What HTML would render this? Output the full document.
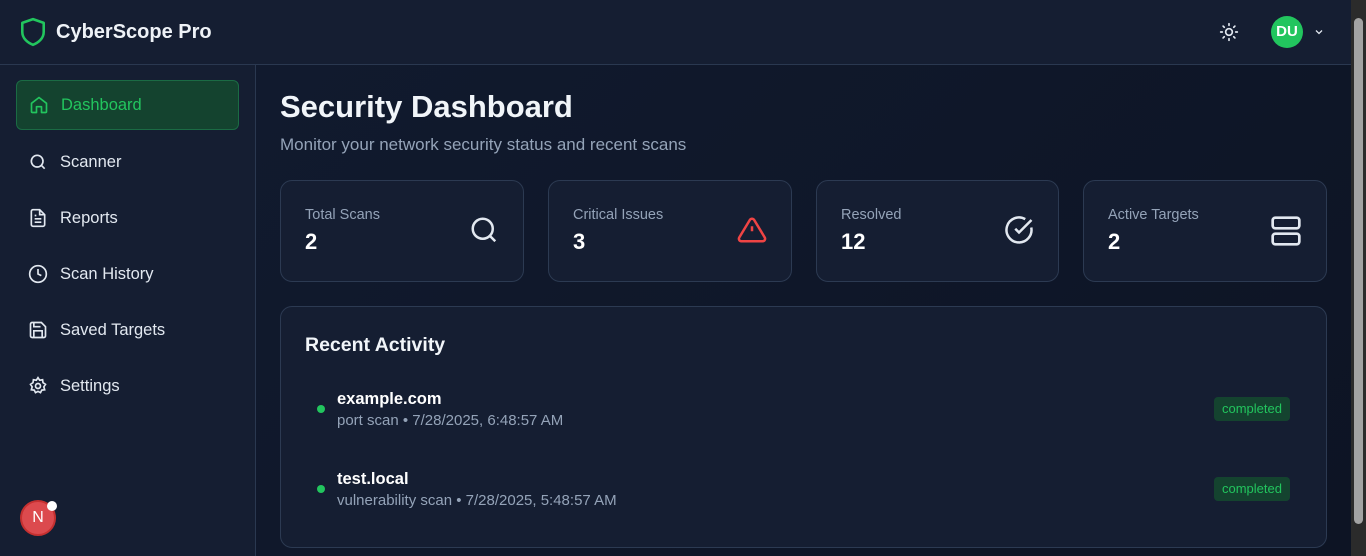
<!DOCTYPE html>
<html><head><meta charset="utf-8"><style>
*{box-sizing:border-box;margin:0;padding:0}
body{width:1366px;height:556px;overflow:hidden;background:#0f172a;font-family:"Liberation Sans",sans-serif;color:#f1f5f9;position:relative}
.hdr{position:absolute;left:0;top:0;width:1351px;height:65px;background:#151e32;border-bottom:1px solid #2a3850}
.logo{position:absolute;left:20px;top:17px}
.brand{position:absolute;left:56px;top:21px;font-size:20px;font-weight:bold;color:#eef2f7}
.side{position:absolute;left:0;top:65px;width:256px;height:491px;background:#151e32;border-right:1px solid #2a3850}
.nav{position:absolute;left:16px;width:223px;height:50px;display:flex;align-items:center;padding-left:12px;font-size:16.5px;color:#e2e8f0}
.nav svg{margin-right:12px}
.nav.act{background:#14432f;border:1px solid #1b6b44;border-radius:6px;color:#22c55e}
.main{position:absolute;left:256px;top:65px;width:1095px;height:491px;background:linear-gradient(135deg,#111a2e,#0d1424)}
h1{position:absolute;left:24px;top:24px;font-size:31px;font-weight:bold}
.sub{position:absolute;left:24px;top:70px;font-size:17px;color:#94a3b8}
.card{position:absolute;top:115px;height:102px;background:#151e32;border:1px solid #2c3a52;border-radius:12px}
.card .l{position:absolute;left:24px;top:26px;font-size:14.5px;color:#94a3b8}
.card .v{position:absolute;left:24px;top:48px;font-size:22px;font-weight:bold;color:#fff}
.card svg{position:absolute;right:24px;top:34px}
.act2{position:absolute;left:24px;top:241px;width:1047px;height:242px;background:#151e32;border:1px solid #2c3a52;border-radius:12px}
.act2 h2{position:absolute;left:24px;top:27px;font-size:19.5px;font-weight:bold}
.it{position:absolute;left:56px;font-size:16.5px;font-weight:bold;color:#fff}
.it div{font-size:15px;font-weight:normal;color:#94a3b8;margin-top:3px}
.dot{position:absolute;left:36px;width:8px;height:8px;border-radius:50%;background:#22c55e}
.badge{position:absolute;left:933px;width:76px;height:24px;border-radius:4px;background:#14432f;color:#22c55e;font-size:13px;text-align:center;line-height:24px}
.sb{position:absolute;left:1351px;top:0;width:15px;height:556px;background:#2b2b2b}
.thumb{position:absolute;left:1354px;top:18px;width:9px;height:506px;background:#a3a3a3;border-radius:5px}
</style></head><body>
<div class="hdr">
<svg class="logo" width="26" height="30" viewBox="0 0 24 28" fill="none" stroke="#22c55e" stroke-width="2.4" stroke-linejoin="round"><path d="M12 2 L22 5.5 V14 C22 20 17 24 12 26 C7 24 2 20 2 14 V5.5 Z"/></svg>
<div class="brand">CyberScope Pro</div>
<svg style="position:absolute;left:1219px;top:22px" width="20" height="20" viewBox="0 0 24 24" fill="none" stroke="#e2e8f0" stroke-width="2" stroke-linecap="round"><circle cx="12" cy="12" r="4"/><path d="M12 2v2M12 20v2M4.9 4.9l1.4 1.4M17.7 17.7l1.4 1.4M2 12h2M20 12h2M4.9 19.1l1.4-1.4M17.7 6.3l1.4-1.4"/></svg>
<div style="position:absolute;left:1271px;top:16px;width:32px;height:32px;border-radius:50%;background:#22c55e;color:#fff;font-weight:bold;font-size:15px;text-align:center;line-height:32px">DU</div>
<svg style="position:absolute;left:1313px;top:26px" width="12" height="12" viewBox="0 0 24 24" fill="none" stroke="#e2e8f0" stroke-width="2.5"><path d="M6 9l6 6 6-6"/></svg>
</div>
<div class="side">
<div class="nav act" style="top:15px"><svg width="20" height="20" viewBox="0 0 24 24" fill="none" stroke="#22c55e" stroke-width="2" stroke-linejoin="round"><path d="M3 10l9-7 9 7v10a1 1 0 0 1-1 1h-5v-7h-6v7H4a1 1 0 0 1-1-1z"/></svg>Dashboard</div>
<div class="nav" style="top:72px"><svg width="20" height="20" viewBox="0 0 24 24" fill="none" stroke="#e2e8f0" stroke-width="2"><circle cx="11" cy="11" r="7"/><path d="M20 20l-4-4"/></svg>Scanner</div>
<div class="nav" style="top:128px"><svg width="20" height="20" viewBox="0 0 24 24" fill="none" stroke="#e2e8f0" stroke-width="2"><path d="M14 2H6a2 2 0 0 0-2 2v16a2 2 0 0 0 2 2h12a2 2 0 0 0 2-2V8z"/><path d="M14 2v6h6M8 13h8M8 17h8M8 9h2"/></svg>Reports</div>
<div class="nav" style="top:184px"><svg width="20" height="20" viewBox="0 0 24 24" fill="none" stroke="#e2e8f0" stroke-width="2"><circle cx="12" cy="12" r="10"/><path d="M12 6v6l4 2"/></svg>Scan History</div>
<div class="nav" style="top:240px"><svg width="20" height="20" viewBox="0 0 24 24" fill="none" stroke="#e2e8f0" stroke-width="2"><path d="M19 21H5a2 2 0 0 1-2-2V5a2 2 0 0 1 2-2h11l5 5v11a2 2 0 0 1-2 2z"/><path d="M17 21v-8H7v8M7 3v5h8"/></svg>Saved Targets</div>
<div class="nav" style="top:296px"><svg width="20" height="20" viewBox="0 0 24 24" fill="none" stroke="#e2e8f0" stroke-width="2"><circle cx="12" cy="12" r="3"/><path d="M12 2l2 3 3.5-.5.5 3.5 3 2-2 3 1 3.5-3.5.5-1.5 3-3-1.5-3 1.5-1.5-3-3.5-.5 1-3.5-2-3 3-2 .5-3.5L10 5z"/></svg>Settings</div>
<div style="position:absolute;left:20px;top:435px;width:36px;height:36px;border-radius:50%;background:#dc4a4e;border:2px solid #c53030;color:#fff;text-align:center;line-height:32px;font-size:16px">N</div>
<div style="position:absolute;left:47px;top:436px;width:10px;height:10px;border-radius:50%;background:#fff"></div>
</div>
<div class="main">
<h1>Security Dashboard</h1>
<div class="sub">Monitor your network security status and recent scans</div>
<div class="card" style="left:24px;width:244px"><div class="l">Total Scans</div><div class="v">2</div><svg width="30" height="30" viewBox="0 0 24 24" fill="none" stroke="#e2e8f0" stroke-width="2"><circle cx="11" cy="11" r="8"/><path d="M21 21l-4.3-4.3"/></svg></div>
<div class="card" style="left:292px;width:244px"><div class="l">Critical Issues</div><div class="v">3</div><svg width="30" height="30" viewBox="0 0 24 24" fill="none" stroke="#ef4444" stroke-width="2" stroke-linejoin="round"><path d="M10.3 3.9L1.8 18a2 2 0 0 0 1.7 3h17a2 2 0 0 0 1.7-3L13.7 3.9a2 2 0 0 0-3.4 0z"/><path d="M12 9v4M12 17h.01"/></svg></div>
<div class="card" style="left:560px;width:243px"><div class="l">Resolved</div><div class="v">12</div><svg width="30" height="30" viewBox="0 0 24 24" fill="none" stroke="#e2e8f0" stroke-width="2"><path d="M21.8 10A10 10 0 1 1 17 3.3"/><path d="M9 11l3 3L22 4"/></svg></div>
<div class="card" style="left:827px;width:244px"><div class="l">Active Targets</div><div class="v">2</div><svg width="32" height="32" viewBox="0 0 24 24" fill="none" stroke="#e2e8f0" stroke-width="2"><rect x="2" y="2" width="20" height="8" rx="2"/><rect x="2" y="14" width="20" height="8" rx="2"/><path d="M6 6h.01M6 18h.01"/></svg></div>
<div class="act2"><h2>Recent Activity</h2>
<div class="dot" style="top:98px"></div><div class="it" style="top:83px">example.com<div>port scan • 7/28/2025, 6:48:57 AM</div></div>
<div class="badge" style="top:90px">completed</div>
<div class="dot" style="top:178px"></div><div class="it" style="top:163px">test.local<div>vulnerability scan • 7/28/2025, 5:48:57 AM</div></div>
<div class="badge" style="top:170px">completed</div>
</div>
</div>
<div class="sb"></div><div class="thumb"></div>
</body></html>
